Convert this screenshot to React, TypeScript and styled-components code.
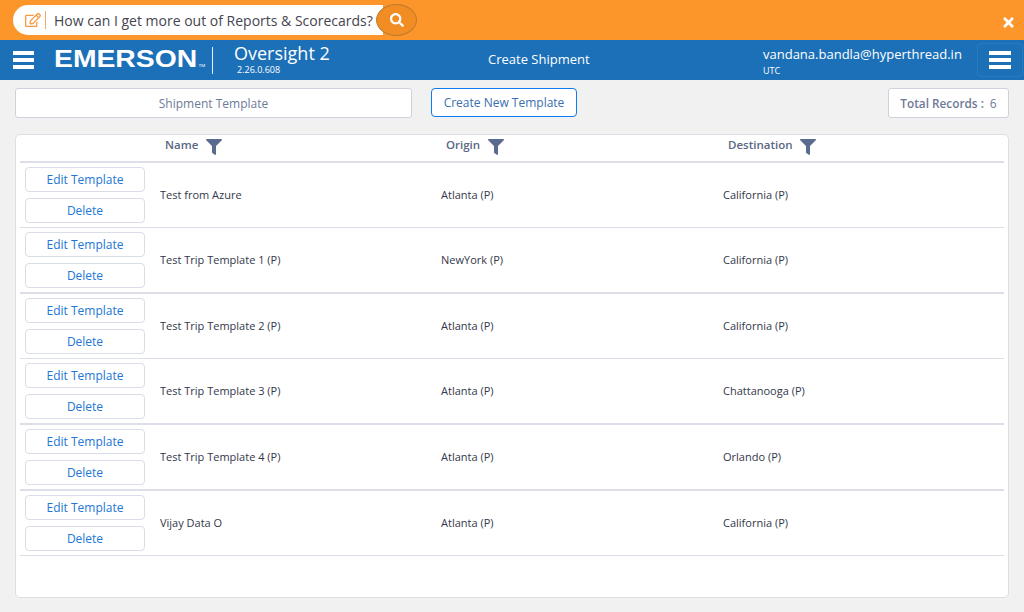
import React from "react";
import styled, { createGlobalStyle } from "styled-components";
import { FaRegEdit, FaSearch, FaTimes, FaFilter } from "react-icons/fa";

const GlobalStyle = createGlobalStyle`
  html, body {
    margin: 0;
    padding: 0;
    background: #f1f1f1;
    font-family: "Open Sans", "Noto Sans", sans-serif;
  }
  * { box-sizing: border-box; }
`;

const Page = styled.div`
  width: 1024px;
  height: 612px;
  overflow: hidden;
  background: #f1f1f1;
`;

const Banner = styled.div`
  height: 40px;
  background: #fc962b;
  display: flex;
  align-items: flex-start;
  justify-content: space-between;
  padding: 5px 8px 0 13px;
`;

const AskPill = styled.div`
  width: 404px;
  height: 30px;
  display: flex;
  align-items: center;
  background: linear-gradient(to right, #fff 0, #fff 370px, transparent 370px);
  border-radius: 15px;
  padding-left: 12px;
`;

const AskIcon = styled(FaRegEdit)`
  color: #fb9a45;
  font-size: 16px;
  flex: none;
`;

const AskDivider = styled.span`
  width: 1px;
  height: 18px;
  background: #f5a96a;
  margin: 0 8px 0 4px;
  flex: none;
`;

const AskText = styled.span`
  font-size: 14px;
  color: #45454f;
  white-space: nowrap;
  flex: 1;
`;

const SearchButton = styled.div`
  width: 41px;
  height: 32px;
  margin-top: -1px;
  border-radius: 50%;
  flex: none;
  background: #f18d22;
  border: 1px solid #bd7b32;
  display: flex;
  align-items: center;
  justify-content: center;
  color: #fff;
  font-size: 14px;
`;

const CloseIcon = styled(FaTimes)`
  color: #fff;
  font-size: 15px;
  margin-top: 10px;
`;

const NavBar = styled.div`
  height: 40px;
  background: #1c70b8;
  color: #fff;
  display: flex;
  align-items: center;
  padding-left: 13px;
`;

const BurgerBars = styled.div<{ $width: number }>`
  width: ${(p) => p.$width}px;
  height: 18px;
  flex: none;
  display: flex;
  flex-direction: column;
  justify-content: space-between;

  span {
    display: block;
    height: 4px;
    background: #fff;
  }
`;

const LogoSlot = styled.div`
  width: 143px;
  margin-left: 20px;
  padding-top: 4px;
  flex: none;
`;

const Logo = styled.div`
  font-family: "Liberation Sans", Arial, sans-serif;
  font-weight: 700;
  font-size: 24px;
  line-height: 24px;
  white-space: nowrap;
  transform: scaleX(1.18);
  transform-origin: left center;
`;

const LogoMark = styled.span`
  font-size: 4px;
  font-weight: 400;
  margin-left: 1px;
`;

const LogoDivider = styled.div`
  width: 1px;
  height: 27px;
  background: #e4eef7;
  margin: 0 21px 0 15px;
  flex: none;
`;

const ProductBlock = styled.div`
  width: 254px;
  flex: none;
  align-self: flex-start;
  padding-top: 2px;
`;

const ProductName = styled.div`
  font-size: 18px;
  line-height: 23px;
`;

const ProductVersion = styled.div`
  font-size: 9px;
  font-weight: 500;
  line-height: 10px;
  padding-left: 3px;
`;

const PageTitle = styled.div`
  width: 275px;
  flex: none;
  font-size: 13px;
  line-height: 18px;
  margin-top: -2px;
  white-space: nowrap;
`;

const UserBlock = styled.div`
  width: 214px;
  flex: none;
  align-self: flex-start;
  padding-top: 5px;
`;

const UserEmail = styled.div`
  font-size: 13px;
  line-height: 18px;
  white-space: nowrap;
`;

const UserZone = styled.div`
  font-size: 9px;
  line-height: 12px;
  margin-top: 2px;
`;

const MenuButton = styled.div`
  width: 46px;
  height: 34px;
  flex: none;
  border: 1px solid #2a7cc2;
  border-radius: 4px;
  display: flex;
  align-items: center;
  justify-content: center;
`;

const Toolbar = styled.div`
  display: flex;
  align-items: flex-start;
  padding: 8px 15px 0;
  height: 54px;
`;

const TemplateLabel = styled.div`
  width: 397px;
  height: 30px;
  background: #fff;
  border: 1px solid #ced2dc;
  border-radius: 3px;
  color: #6e7a98;
  font-size: 12px;
  display: flex;
  align-items: center;
  justify-content: center;
`;

const CreateButton = styled.div`
  width: 146px;
  height: 29px;
  margin-left: 19px;
  background: #fff;
  border: 1px solid #0d7bf2;
  border-radius: 4px;
  color: #3a6fae;
  font-size: 12px;
  display: flex;
  align-items: center;
  justify-content: center;
`;

const RecordsBox = styled.div`
  width: 121px;
  height: 30px;
  margin-left: auto;
  background: #fff;
  border: 1px solid #ced2dc;
  border-radius: 3px;
  color: #6e7a98;
  font-size: 12px;
  display: flex;
  align-items: center;
  justify-content: center;
  gap: 6px;

  strong {
    font-size: 11.8px;
    font-weight: 600;
  }
`;

const Card = styled.div`
  width: 994px;
  height: 464px;
  margin-left: 15px;
  background: #fff;
  border: 1px solid #dcdfe6;
  border-radius: 5px;
  padding: 0 4px;
`;

const HeaderRow = styled.div`
  height: 28px;
  display: flex;
  border-bottom: 2px solid #dcdfe8;
`;

const HeaderCell = styled.div<{ $width: number }>`
  width: ${(p) => p.$width}px;
  flex: none;
  display: flex;
  align-items: flex-start;
  gap: 8px;
  padding: 1px 0 0 5px;
  color: #5a6785;
  font-size: 11.5px;
  font-weight: 600;
  line-height: 18px;
`;

const FilterIcon = styled(FaFilter)`
  color: #5b6b8f;
  font-size: 16px;
  margin-top: 3px;
`;

const ActionSpacer = styled.div`
  width: 140px;
  flex: none;
`;

const Row = styled.div<{ $thick: boolean; $height: number }>`
  height: ${(p) => p.$height}px;
  display: flex;
  align-items: center;
  border-bottom: ${(p) => (p.$thick ? "2px" : "1px")} solid #dcdfe8;
`;

const ActionCell = styled.div`
  width: 140px;
  flex: none;
  padding: 0 5px;
  display: flex;
  flex-direction: column;
  gap: 6px;
`;

const RowButton = styled.div`
  width: 120px;
  height: 25px;
  background: #fff;
  border: 1px solid #d9dde8;
  border-radius: 4px;
  color: #2276d6;
  font-size: 12px;
  display: flex;
  align-items: center;
  justify-content: center;
`;

const DataCell = styled.div<{ $width: number }>`
  width: ${(p) => p.$width}px;
  flex: none;
  margin-top: -2px;
  color: #33384a;
  font-size: 11px;
  white-space: nowrap;
`;

const columns = [
  { title: "Name", width: 281 },
  { title: "Origin", width: 282 },
  { title: "Destination", width: 280 },
];

const rows = [
  { name: "Test from Azure", origin: "Atlanta (P)", destination: "California (P)", height: 65, thick: false },
  { name: "Test Trip Template 1 (P)", origin: "NewYork (P)", destination: "California (P)", height: 66, thick: true },
  { name: "Test Trip Template 2 (P)", origin: "Atlanta (P)", destination: "California (P)", height: 65, thick: false },
  { name: "Test Trip Template 3 (P)", origin: "Atlanta (P)", destination: "Chattanooga (P)", height: 66, thick: true },
  { name: "Test Trip Template 4 (P)", origin: "Atlanta (P)", destination: "Orlando (P)", height: 66, thick: true },
  { name: "Vijay Data O", origin: "Atlanta (P)", destination: "California (P)", height: 65, thick: false },
];

function Burger({ width }: { width: number }) {
  return (
    <BurgerBars $width={width}>
      <span />
      <span />
      <span />
    </BurgerBars>
  );
}

export default function App() {
  return (
    <Page>
      <GlobalStyle />
      <Banner>
        <AskPill>
          <AskIcon />
          <AskDivider />
          <AskText>How can I get more out of Reports &amp; Scorecards?</AskText>
          <SearchButton>
            <FaSearch />
          </SearchButton>
        </AskPill>
        <CloseIcon />
      </Banner>

      <NavBar>
        <Burger width={21} />
        <LogoSlot>
          <Logo>
            EMERSON<LogoMark>TM</LogoMark>
          </Logo>
        </LogoSlot>
        <LogoDivider />
        <ProductBlock>
          <ProductName>Oversight 2</ProductName>
          <ProductVersion>2.26.0.608</ProductVersion>
        </ProductBlock>
        <PageTitle>Create Shipment</PageTitle>
        <UserBlock>
          <UserEmail>vandana.bandla@hyperthread.in</UserEmail>
          <UserZone>UTC</UserZone>
        </UserBlock>
        <MenuButton>
          <Burger width={22} />
        </MenuButton>
      </NavBar>

      <Toolbar>
        <TemplateLabel>Shipment Template</TemplateLabel>
        <CreateButton>Create New Template</CreateButton>
        <RecordsBox>
          <strong>Total Records :</strong>
          <span>6</span>
        </RecordsBox>
      </Toolbar>

      <Card>
        <HeaderRow>
          <ActionSpacer />
          {columns.map((col) => (
            <HeaderCell key={col.title} $width={col.width}>
              {col.title}
              <FilterIcon />
            </HeaderCell>
          ))}
        </HeaderRow>
        {rows.map((row) => (
          <Row key={row.name} $thick={row.thick} $height={row.height}>
            <ActionCell>
              <RowButton>Edit Template</RowButton>
              <RowButton>Delete</RowButton>
            </ActionCell>
            <DataCell $width={columns[0].width}>{row.name}</DataCell>
            <DataCell $width={columns[1].width}>{row.origin}</DataCell>
            <DataCell $width={columns[2].width}>{row.destination}</DataCell>
          </Row>
        ))}
      </Card>
    </Page>
  );
}
